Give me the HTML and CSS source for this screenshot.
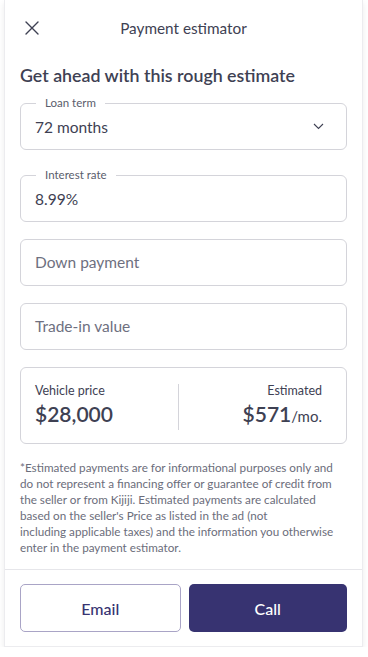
FILE: index.html
```html
<!DOCTYPE html>
<html lang="en">
<head>
    <meta charset="UTF-8">
    <meta name="viewport" content="width=device-width, initial-scale=1.0">
    <title>Payment estimator</title>
    <link rel="stylesheet" href="styles.css">
</head>
<body>
    <div class="sheet">
        <div class="sheet-header">
            <button class="close-btn" aria-label="Close">
                <svg width="14" height="14" viewBox="0 0 14 14"><path d="M1 1L13 13M13 1L1 13" stroke="#3e4153" stroke-width="1.4" stroke-linecap="round"/></svg>
            </button>
            <span class="header-title">Payment estimator</span>
        </div>

        <div class="sheet-body">
            <h2>Get ahead with this rough estimate</h2>

            <div class="field">
                <span class="field-label">Loan term</span>
                <span class="field-value">72 months</span>
                <svg class="chevron" width="11" height="7" viewBox="0 0 11 7"><path d="M1 1L5.5 5.5L10 1" fill="none" stroke="#3e4153" stroke-width="1.1"/></svg>
            </div>

            <div class="field labelled">
                <span class="field-label">Interest rate</span>
                <span class="field-value">8.99%</span>
            </div>

            <div class="field">
                <span class="placeholder">Down payment</span>
            </div>

            <div class="field">
                <span class="placeholder">Trade-in value</span>
            </div>

            <div class="summary">
                <div class="summary-col">
                    <span class="summary-label">Vehicle price</span>
                    <span class="summary-amount">$28,000</span>
                </div>
                <div class="summary-divider"></div>
                <div class="summary-col right">
                    <span class="summary-label">Estimated</span>
                    <span class="summary-amount">$571<small>/mo.</small></span>
                </div>
            </div>

            <p class="disclaimer">*Estimated payments are for informational purposes only and<br>do not represent a financing offer or guarantee of credit from<br>the seller or from Kijiji. Estimated payments are calculated<br>based on the seller's Price as listed in the ad (not<br>including applicable taxes) and the information you otherwise<br>enter in the payment estimator.</p>
        </div>

        <div class="sheet-footer">
            <button class="btn btn-outline">Email</button>
            <button class="btn btn-primary">Call</button>
        </div>
    </div>
</body>
</html>
```

FILE: styles.css
```css
body {
    margin: 0;
    background: #fff;
    font-family: Lato, "Liberation Sans", sans-serif;
    color: #3e4153;
}
.sheet {
    width: 359px;
    margin: 0 0 0 4px;
    background: #fff;
    border: 1px solid #ececef;
    border-top: none;
    box-sizing: border-box;
    box-shadow: 0 3px 6px rgba(0,0,0,0.08);
}
.sheet-header {
    position: relative;
    height: 56px;
    display: flex;
    align-items: center;
    justify-content: center;
}
.close-btn {
    position: absolute;
    left: 16px;
    top: 17px;
    width: 22px;
    height: 22px;
    padding: 0;
    border: none;
    background: none;
    display: flex;
    align-items: center;
    justify-content: center;
}
.header-title {
    font-size: 15.3px;
    margin-top: -1px;
}
.sheet-body {
    padding: 0 15px;
}
h2 {
    margin: 7px 0 16px;
    font-size: 17.8px;
    font-weight: 600;
    line-height: 24px;
}
.field {
    position: relative;
    height: 47px;
    border: 1px solid #d4d4da;
    border-radius: 6px;
    box-sizing: border-box;
    padding: 0 14px;
    display: flex;
    align-items: center;
    margin-bottom: 17px;
    font-size: 15.5px;
}
.field.labelled {
    margin-top: 25px;
}
.field-label {
    position: absolute;
    left: 15px;
    top: -8px;
    padding: 0 9px;
    background: #fff;
    font-size: 11.5px;
    line-height: 14px;
    color: #5a5d6c;
}
.field-value {
    flex: 1;
    margin-top: 1px;
}
.chevron {
    margin-right: 8px;
}
.placeholder {
    color: #6e7080;
    margin-top: -1px;
}
.summary {
    height: 77px;
    border: 1px solid #d4d4da;
    border-radius: 6px;
    box-sizing: border-box;
    padding: 15px 24px 0 14px;
    display: flex;
    margin-bottom: 15px;
}
.summary-col {
    flex: 1;
    display: flex;
    flex-direction: column;
}
.summary-col.right {
    align-items: flex-end;
}
.summary-label {
    font-size: 12.5px;
    line-height: 16px;
}
.summary-amount {
    font-size: 21px;
    font-weight: 600;
    line-height: 28px;
    margin-top: 1px;
}
.summary-amount small {
    font-size: 15px;
    font-weight: 400;
}
.summary-divider {
    width: 1px;
    height: 46px;
    background: #d4d4da;
    margin-top: 1px;
}
.disclaimer {
    margin: 0;
    font-size: 11.7px;
    line-height: 16px;
    color: #6b6d7b;
    white-space: nowrap;
    padding-bottom: 14px;
}
.sheet-footer {
    border-top: 1px solid #e6e6ea;
    padding: 14px 15px 14px;
    display: flex;
    gap: 8px;
}
.btn {
    flex: 1;
    height: 48px;
    border-radius: 5px;
    font-family: inherit;
    font-size: 16px;
    font-weight: 500;
    box-sizing: border-box;
}
.btn-outline {
    background: #fff;
    border: 1.5px solid #a9a4c6;
    color: #373371;
}
.btn-primary {
    background: #373371;
    border: none;
    color: #fff;
}
```
